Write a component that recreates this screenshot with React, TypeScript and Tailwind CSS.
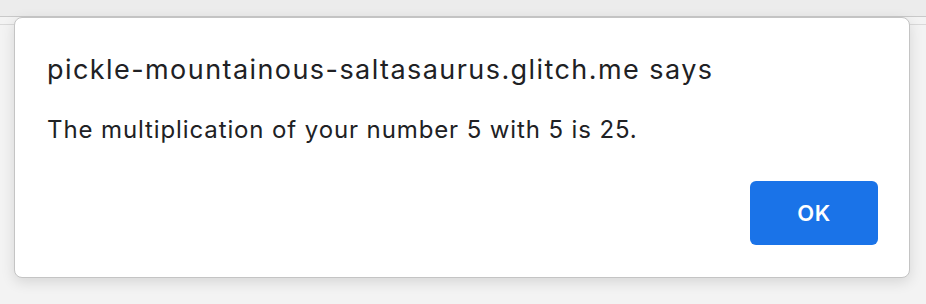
export default function App() {
  return (
    <div className="relative h-[304px] w-[926px] overflow-hidden bg-[#f3f3f3] font-['Inter',sans-serif]">
      {/* page behind the alert */}
      <div className="h-[17px] border-b border-[#c9c9c9] bg-[#ececec]" />
      <div className="mt-[7px] h-px bg-[#d9d9d9]" />

      {/* alert dialog */}
      <div className="absolute left-[14px] top-[17px] flex h-[261px] w-[896px] flex-col rounded-[8px] border border-[#c4c4c4] bg-white shadow-[0_4px_14px_rgba(0,0,0,0.12)]">
        <div className="pl-[32px] pt-[35px] text-[27px] leading-[34px] tracking-[0.053em] text-[#202124]">
          pickle-mountainous-saltasaurus.glitch.me says
        </div>
        <div className="pl-[32px] pt-[28px] text-[24px] leading-[30px] tracking-[0.037em] text-[#202124]">
          The multiplication of your number 5 with 5 is 25.
        </div>
        <div className="flex flex-1 items-start justify-end pr-[31px] pt-[36px]">
          <button className="flex h-[64px] w-[128px] items-center justify-center rounded-[6px] bg-[#1a73e8] text-[22px] font-semibold tracking-[0.03em] text-white">
            OK
          </button>
        </div>
      </div>
    </div>
  );
}
